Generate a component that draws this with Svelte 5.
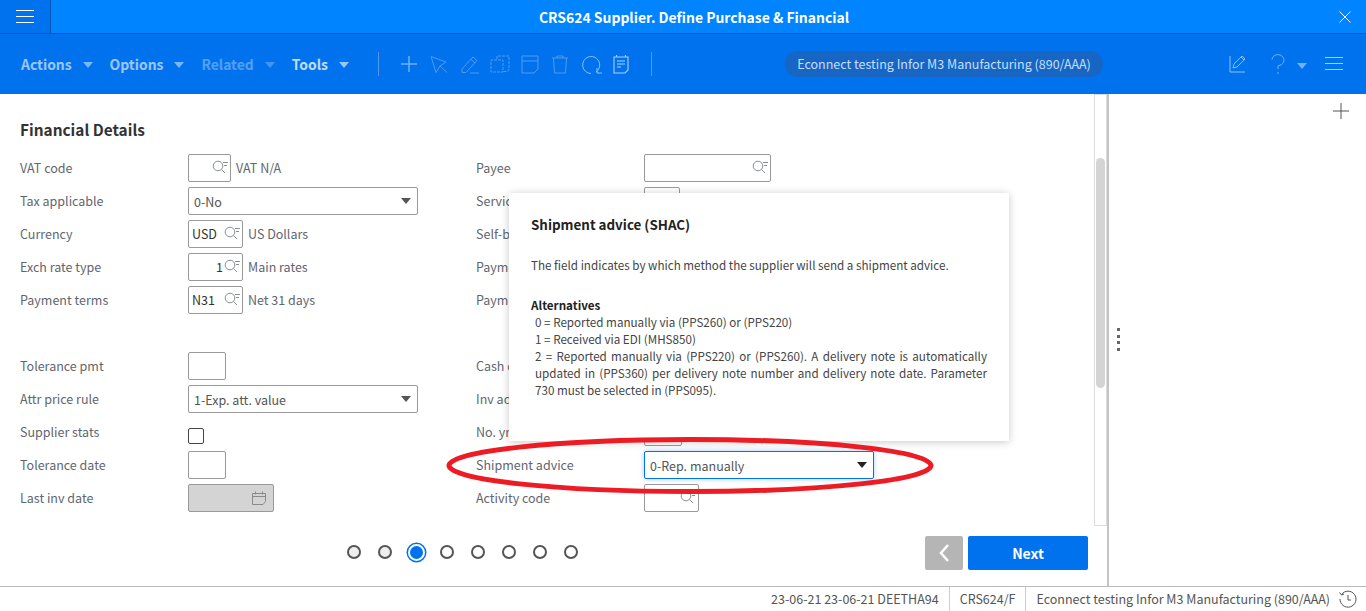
<script lang="ts">
  const menus = [
    { label: "Actions", dim: 0.6 },
    { label: "Options", dim: 0.6 },
    { label: "Related", dim: 0.32 },
    { label: "Tools", dim: 0.75 },
  ];

  const left = [
    { label: "VAT code", kind: "search", width: 43, after: "VAT N/A" },
    { label: "Tax applicable", kind: "select", value: "0-No" },
    { label: "Currency", kind: "search", width: 55, value: "USD", after: "US Dollars" },
    { label: "Exch rate type", kind: "search", width: 55, value: "1", right: true, after: "Main rates" },
    { label: "Payment terms", kind: "search", width: 55, value: "N31", after: "Net 31 days" },
    { label: "", kind: "" },
    { label: "Tolerance pmt", kind: "input", width: 38 },
    { label: "Attr price rule", kind: "select", value: "1-Exp. att. value" },
    { label: "Supplier stats", kind: "check" },
    { label: "Tolerance date", kind: "input", width: 38 },
    { label: "Last inv date", kind: "date" },
  ];

  const right = [
    { label: "Payee", kind: "search", width: 127 },
    { label: "Service", kind: "input", width: 36 },
    { label: "Self-bill", kind: "" },
    { label: "Payment", kind: "" },
    { label: "Payment", kind: "" },
    { label: "", kind: "" },
    { label: "Cash disc", kind: "" },
    { label: "Inv adj", kind: "" },
    { label: "No. yrs", kind: "input", width: 38 },
    { label: "Shipment advice", kind: "select", value: "0-Rep. manually", focus: true },
    { label: "Activity code", kind: "search", width: 55 },
  ];

  const steps = [0, 1, 2, 3, 4, 5, 6, 7];
  const current = 2;
</script>

{#snippet searchIcon()}
  <svg class="lookup" width="18" height="16" viewBox="0 0 18 16" fill="none" stroke="#8a8f96" stroke-width="1">
    <circle cx="7" cy="7" r="4.8" />
    <path d="M10.5 10.5l3.5 3.5M12 3.5h5M13 6.5h3" />
  </svg>
{/snippet}

{#snippet fieldRow(f)}
  <div class="row">
    <span class="label">{f.label}</span>
    {#if f.kind === "search"}
      <div class="box" style={`width:${f.width}px`}>
        <span class="val" class:end={f.right}>{f.value ?? ""}</span>
        {@render searchIcon()}
      </div>
      {#if f.after}<span class="after">{f.after}</span>{/if}
    {:else if f.kind === "select"}
      <div class="box select" class:focus={f.focus}>
        <span class="val pad">{f.value}</span>
        <span class="arrow"></span>
      </div>
    {:else if f.kind === "input"}
      <div class="box" style={`width:${f.width}px`}></div>
    {:else if f.kind === "check"}
      <div class="check"></div>
    {:else if f.kind === "date"}
      <div class="box date">
        <svg width="16" height="16" viewBox="0 0 16 16" fill="none" stroke="#8a8a8a">
          <path d="M1.5 3.5h13v8l-2.500 3h-10.500zM1.500 6.500h13M4.500 1.500v3M11.500 1.500v3" />
        </svg>
      </div>
    {/if}
  </div>
{/snippet}

<div class="app">
  <header class="titlebar">
    <button class="burger" aria-label="Menu">
      <svg width="18" height="14" viewBox="0 0 18 14" stroke="#fff"><path d="M0 .5h18M0 6.500h18M0 12.500h18" /></svg>
    </button>
    <h1>CRS624 Supplier. Define Purchase &amp; Financial</h1>
    <svg class="close" width="12" height="12" viewBox="0 0 12 12" stroke="#fff" stroke-width="1"><path d="M.5 .5l11 11M11.500 .5l-11 11" /></svg>
  </header>

  <div class="toolbar">
    <nav class="menus">
      {#each menus as m}
        <span class="menu" style={`opacity:${m.dim}`}>{m.label}<i class="caret"></i></span>
      {/each}
    </nav>
    <span class="sep"></span>
    <div class="tools">
      <svg width="24" height="24" viewBox="0 0 24 24" fill="none" stroke="#6fb0f6" stroke-width="1.500"><path d="M12 4v16M4 12h16" /></svg>
      <svg width="24" height="24" viewBox="0 0 24 24" fill="none" stroke="#4f9bf0"><path d="M4 4.500l15 5.500-6 4-4 6.500zM13 14l7 6.500" /></svg>
      <svg width="24" height="24" viewBox="0 0 24 24" fill="none" stroke="#4f9bf0"><path d="M4 17l11-12 4 3.500L8 20.500H4zM13 7.500l4 3.500M12 21h9" /></svg>
      <svg width="24" height="24" viewBox="0 0 24 24" fill="none" stroke="#4f9bf0"><path d="M9 7V4h12v13.500l-2 2h-4M9 8H3v12h12V8z" stroke-dasharray="3 1" /></svg>
      <svg width="24" height="24" viewBox="0 0 24 24" fill="none" stroke="#4f9bf0"><path d="M4 4h16v13l-4 4H4zM4 9h16" /></svg>
      <svg width="24" height="24" viewBox="0 0 24 24" fill="none" stroke="#4f9bf0"><path d="M4 6h16M9 6V4h6v2M5.500 6l1 15h11l1-15" /></svg>
      <svg width="24" height="24" viewBox="0 0 24 24" fill="none" stroke="#8fc0f8"><path d="M17 20a8.500 8.500 0 1 0-5 1.500M18 16v5h5" /></svg>
      <svg width="24" height="24" viewBox="0 0 24 24" fill="none" stroke="#a9d0fa" stroke-width="1.100"><path d="M5 5h14v13l-3 3H5zM7.500 3v2M16.500 3v2M8 9h8M8 12h8M8 15h4" /></svg>
    </div>
    <span class="sep second"></span>
    <span class="company">Econnect testing Infor M3 Manufacturing (890/AAA)</span>
    <div class="tb-right">
      <svg width="22" height="22" viewBox="0 0 22 22" fill="none" stroke="#8fc0f8"><path d="M3 3v16h15M6 15l1-4 8-8 3 3-8 8zM14 4l3 3" /></svg>
      <svg class="help" width="16" height="22" viewBox="0 0 16 22" fill="none" stroke="#6fb0f6"><path d="M2 6.500a6 5.500 0 1 1 7 6l-1 .500V16M8 19v2" /></svg>
      <i class="caret"></i>
      <svg class="list" width="18" height="14" viewBox="0 0 18 14" stroke="#a9d0fa"><path d="M0 .5h18M0 6.500h18M0 12.500h18" /></svg>
    </div>
  </div>

  <main class="main">
    <section class="content">
      <h2>Financial Details</h2>
      <div class="form">
        <div class="col">
          {#each left as f}{@render fieldRow(f)}{/each}
        </div>
        <div class="col">
          {#each right as f}{@render fieldRow(f)}{/each}
        </div>
      </div>
      <div class="pager-row">
        <div class="pager">
          {#each steps as s}
            <span class="dot" class:seen={s < current} class:on={s === current}></span>
          {/each}
        </div>
        <button class="prev" aria-label="Previous">
          <svg width="12" height="20" viewBox="0 0 12 20" fill="none" stroke="#fff" stroke-width="2.500"><path d="M10 2L3 10l7 8" /></svg>
        </button>
        <button class="next">Next</button>
      </div>
    </section>
    <div class="track"><div class="thumb"></div></div>
    <aside class="side">
      <div class="grip"><i></i><i></i><i></i><i></i></div>
      <svg class="plus" width="16" height="16" viewBox="0 0 16 16" stroke="#555"><path d="M8 0v16M0 8h16" /></svg>
    </aside>

    <div class="popup">
      <h3>Shipment advice (SHAC)</h3>
      <p class="intro">The field indicates by which method the supplier will send a shipment advice.</p>
      <p class="alt-head">Alternatives</p>
      <ul>
        <li>0 = Reported manually via (PPS260) or (PPS220)</li>
        <li>1 = Received via EDI (MHS850)</li>
        <li class="just">2 = Reported manually via (PPS220) or (PPS260). A delivery note is automatically updated in (PPS360) per delivery note number and delivery note date. Parameter 730 must be selected in (PPS095).</li>
      </ul>
      <span class="tip"></span>
    </div>
  </main>

  <footer class="status">
    <span>23-06-21 23-06-21 DEETHA94</span>
    <span>CRS624/F</span>
    <span class="last">Econnect testing Infor M3 Manufacturing (890/AAA)</span>
    <svg width="20" height="20" viewBox="0 0 20 20" fill="none" stroke="#555"><path d="M3.500 5.500a8 8 0 1 1-1.500 4.500M1.500 3.500l2 2.500 2.500-1M10 6v5h3" /></svg>
  </footer>

  <svg class="mark" width="1366" height="611" viewBox="0 0 1366 611" fill="none">
    <ellipse cx="690" cy="465.500" rx="241" ry="26" stroke="#ed1c24" stroke-width="5" />
  </svg>
</div>

<style>
  :global(body) {
    margin: 0;
    background: #fff;
  }
  .app {
    position: relative;
    width: 1366px;
    height: 611px;
    display: flex;
    flex-direction: column;
    overflow: hidden;
    font-family: "Noto Sans CJK SC", "Noto Sans", sans-serif;
    font-size: 12.500px;
    color: #5f6670;
  }
  .titlebar {
    position: relative;
    height: 33px;
    flex: none;
    display: flex;
    align-items: center;
    background: #0084ff;
    border-bottom: 1px solid #0058b8;
  }
  .burger {
    width: 51px;
    height: 33px;
    padding: 0;
    flex: none;
    background: #0072ed;
    border: 0;
    border-right: 1px solid #0058b8;
    display: flex;
    align-items: center;
    justify-content: center;
  }
  h1 {
    flex: 1;
    margin: 0;
    padding-right: 2px;
    text-align: center;
    font-size: 13.950px;
    font-weight: 700;
    color: #fff;
  }
  .close {
    flex: none;
    margin-right: 15px;
  }
  .toolbar {
    height: 60px;
    flex: none;
    display: flex;
    align-items: center;
    background: #0072ed;
    padding-left: 21px;
  }
  .menus {
    display: flex;
    width: 357px;
    flex: none;
  }
  .menu {
    display: flex;
    align-items: center;
    margin-top: -1px;
    font-size: 13.900px;
    font-weight: 700;
    color: #fff;
    margin-right: 17px;
  }
  .caret {
    display: inline-block;
    width: 0;
    height: 0;
    margin-left: 11px;
    margin-top: 3px;
    opacity: 0.8;
    border-left: 5px solid transparent;
    border-right: 5px solid transparent;
    border-top: 6px solid currentColor;
  }
  .sep {
    width: 1px;
    height: 24px;
    flex: none;
    background: #4f9bf0;
  }
  .tools {
    display: flex;
    gap: 6.300px;
    margin-left: 18px;
    width: 254px;
    flex: none;
  }
  .sep.second {
    margin-left: 0;
  }
  .company {
    margin-left: 133px;
    width: 318px;
    height: 26px;
    flex: none;
    box-sizing: border-box;
    border-radius: 13px;
    background: #1766c4;
    color: #c5defa;
    text-align: center;
    line-height: 26px;
    white-space: nowrap;
  }
  .tb-right {
    display: flex;
    align-items: center;
    margin-left: 124px;
    color: #8fc0f8;
  }
  .help {
    margin-left: 21px;
  }
  .tb-right .caret {
    margin-left: 11px;
  }
  .list {
    margin-left: 18px;
  }
  .main {
    position: relative;
    flex: 1;
    display: flex;
    min-height: 0;
  }
  .content {
    width: 1094px;
    flex: none;
    box-sizing: border-box;
    padding: 0 6px 0 20px;
  }
  h2 {
    margin: 24px 0 11px;
    height: 22px;
    line-height: 22px;
    font-size: 15.400px;
    font-weight: 700;
    color: #333;
  }
  .form {
    display: grid;
    grid-template-columns: 456px 1fr;
  }
  .row {
    height: 33px;
    display: flex;
    align-items: center;
    white-space: nowrap;
  }
  .label {
    width: 168px;
    flex: none;
    margin-top: -1px;
  }
  .box {
    position: relative;
    height: 28px;
    box-sizing: border-box;
    display: flex;
    align-items: center;
    background: #fff;
    border: 1px solid #999;
    border-radius: 2px;
    color: #333;
  }
  .val {
    flex: 1;
    padding-left: 3px;
    min-width: 0;
  }
  .val.pad {
    padding-left: 5px;
    padding-top: 1px;
  }
  .val.end {
    text-align: right;
    padding-right: 0;
  }
  .lookup {
    flex: none;
    margin: 0 1px 2px 0;
  }
  .after {
    margin-left: 5px;
    margin-top: -1px;
  }
  .select {
    width: 230px;
  }
  .select .val {
    color: #555;
  }
  .select.focus {
    border-color: #0072ed;
    box-shadow: 0 0 5px rgba(0, 114, 237, 0.35);
  }
  .arrow {
    width: 0;
    height: 0;
    margin-right: 6px;
    border-left: 5px solid transparent;
    border-right: 5px solid transparent;
    border-top: 6px solid #555;
  }
  .focus .arrow {
    border-top-color: #222;
  }
  .check {
    width: 16px;
    height: 16px;
    margin-top: 8px;
    box-sizing: border-box;
    border: 1px solid #444;
    border-radius: 2px;
  }
  .date {
    width: 86px;
    justify-content: flex-end;
    padding-right: 6px;
    background: #d4d4d4;
  }
  .pager-row {
    display: flex;
    align-items: center;
    margin-top: 22px;
    height: 34px;
  }
  .pager {
    display: flex;
    align-items: center;
    gap: 17px;
    margin-left: 327px;
    margin-top: -2px;
  }
  .dot {
    width: 14px;
    height: 14px;
    box-sizing: border-box;
    border: 2px solid #555;
    border-radius: 50%;
  }
  .dot.seen {
    background: #eee;
  }
  .dot.on {
    background: #0072ed;
    border-color: #fff;
    box-shadow: 0 0 0 1.500px #0072ed;
    width: 17px;
    height: 17px;
    margin: 0 -1.500px;
  }
  .prev {
    margin-left: auto;
    width: 38px;
    height: 34px;
    padding: 0;
    border: 0;
    border-radius: 2px;
    background: #b5b5b5;
    display: flex;
    align-items: center;
    justify-content: center;
  }
  .next {
    width: 120px;
    height: 34px;
    margin-left: 5px;
    padding: 0;
    border: 0;
    border-radius: 2px;
    background: #0072ed;
    color: #fff;
    font: 700 14px "Noto Sans CJK SC", "Noto Sans", sans-serif;
  }
  .track {
    width: 13px;
    height: 432px;
    flex: none;
    box-sizing: border-box;
    border: 1px solid #ddd;
    border-top-width: 1px;
    position: relative;
  }
  .thumb {
    position: absolute;
    top: 63px;
    left: 1px;
    width: 9px;
    height: 230px;
    border-radius: 5px;
    background: #d4d4d4;
  }
  .side {
    position: relative;
    flex: 1;
    border-left: 2px solid #c4c4c4;
  }
  .grip {
    position: absolute;
    left: 8px;
    top: 234px;
    display: flex;
    flex-direction: column;
    gap: 3.500px;
  }
  .grip i {
    width: 3px;
    height: 3px;
    background: #666;
  }
  .plus {
    position: absolute;
    right: 17px;
    top: 9px;
  }
  .popup {
    position: absolute;
    left: 509px;
    top: 99px;
    width: 500px;
    height: 248px;
    box-sizing: border-box;
    padding: 21px 22px 0;
    background: #fff;
    box-shadow: 0 1px 8px rgba(0, 0, 0, 0.22);
    color: #333;
    font-size: 11.650px;
    line-height: 17px;
  }
  h3 {
    margin: 0;
    font-size: 13.400px;
    line-height: 20px;
    font-weight: 700;
    color: #222;
  }
  .intro {
    margin: 22px 0 0;
    color: #444;
  }
  .alt-head {
    margin: 23px 0 0;
    font-weight: 700;
    color: #222;
  }
  ul {
    list-style: none;
    margin: 0;
    padding: 0 0 0 4px;
    color: #444;
  }
  .just {
    text-align: justify;
  }
  .tip {
    position: absolute;
    left: 243px;
    bottom: -5px;
    width: 0;
    height: 0;
    border-left: 6px solid transparent;
    border-right: 6px solid transparent;
    border-top: 5px solid #fff;
  }
  .status {
    height: 25px;
    flex: none;
    box-sizing: border-box;
    border-top: 1px solid #bbb;
    display: flex;
    align-items: stretch;
    justify-content: flex-end;
    color: #555;
    padding-right: 8px;
  }
  .status span {
    display: flex;
    align-items: center;
    padding: 0 10px 2px;
    border-right: 1px solid #ccc;
  }
  .status .last {
    border-right: 0;
    padding-right: 8px;
  }
  .status svg {
    align-self: center;
  }
  .mark {
    position: absolute;
    left: 0;
    top: 0;
    pointer-events: none;
  }
</style>
